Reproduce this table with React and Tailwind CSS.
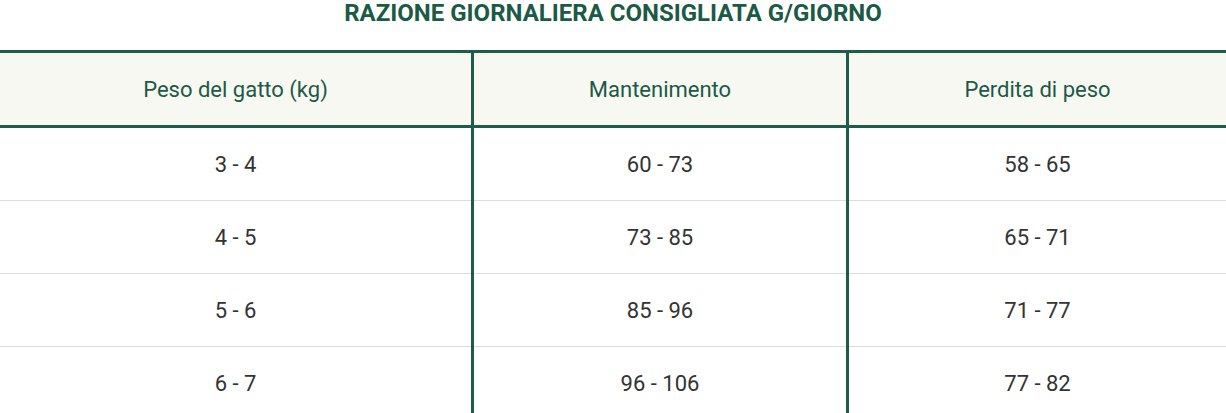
const green = "border-[#1d5c48]";

const columns = [
  { title: "Peso del gatto (kg)", values: ["3 - 4", "4 - 5", "5 - 6", "6 - 7"] },
  { title: "Mantenimento", values: ["60 - 73", "73 - 85", "85 - 96", "96 - 106"] },
  { title: "Perdita di peso", values: ["58 - 65", "65 - 71", "71 - 77", "77 - 82"] },
];

const widths = ["w-[471px]", "w-[375px] border-l-[3px] border-[#1d5c48]", "flex-1 border-l-[3px] border-[#1d5c48]"];

export default function App() {
  return (
    <div className="w-[1226px] h-[413px] overflow-hidden bg-white font-['Roboto',sans-serif]">
      <h2 className="h-[50px] pt-[1px] text-center text-[24px] leading-[24px] font-bold uppercase text-[#1b5a45]">
        Razione giornaliera consigliata g/giorno
      </h2>

      <div className="flex">
        {columns.map((col, i) => (
          <div key={col.title} className={`flex flex-col ${widths[i]}`}>
            <div className={`h-[78px] border-y-[3px] ${green} bg-[#f8f8f3] flex items-center justify-center text-[22px] text-[#1b5a45]`}>
              {col.title}
            </div>
            {col.values.map((v) => (
              <div
                key={v}
                className="h-[73px] border-b border-[#dcdcdc] flex items-center justify-center text-[22px] text-[#333333]"
              >
                {v}
              </div>
            ))}
          </div>
        ))}
      </div>
    </div>
  );
}
